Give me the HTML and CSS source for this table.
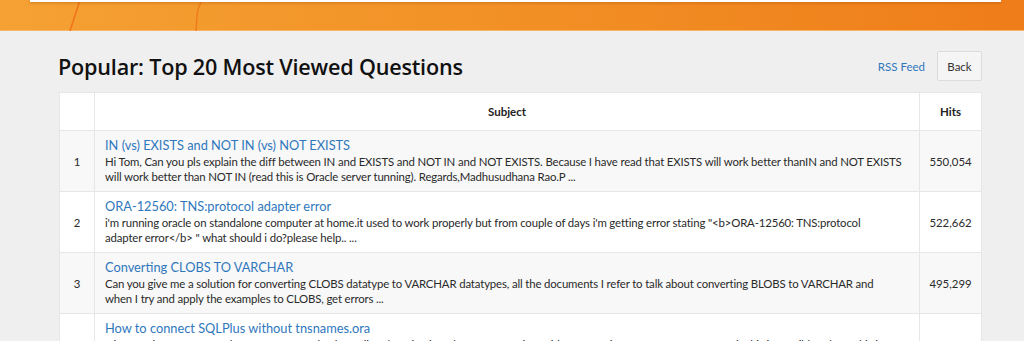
FILE: index.html
```html
<!DOCTYPE html>
<html lang="en">
<head>
<meta charset="utf-8">
<title>Popular: Top 20 Most Viewed Questions</title>
<link rel="stylesheet" href="styles.css">
</head>
<body>
<header class="banner">
  <svg class="banner-lines" width="1024" height="31" viewBox="0 0 1024 31" aria-hidden="true">
    <path d="M80 0 L70 31" stroke="#f0741a" stroke-width="1.6" fill="none"/>
    <path d="M202 0 Q197 10 197 16 L196 31" stroke="#ef7a1e" stroke-width="1.4" fill="none"/>
  </svg>
  <div class="banner-panel"></div>
</header>
<main class="page">
  <div class="page-head">
    <h1 class="page-title">Popular: Top 20 Most Viewed Questions</h1>
    <div class="page-actions">
      <a class="rss" href="#">RSS Feed</a>
      <button class="btn" type="button">Back</button>
    </div>
  </div>
  <table class="qtable">
    <thead>
      <tr><th class="c-num"></th><th class="c-subj">Subject</th><th class="c-hits">Hits</th></tr>
    </thead>
    <tbody>
      <tr>
        <td class="c-num">1</td>
        <td class="c-subj"><a class="q-title" href="#">IN (vs) EXISTS and NOT IN (vs) NOT EXISTS</a>
          <p class="q-desc">Hi Tom, Can you pls explain the diff between IN and EXISTS and NOT IN and NOT EXISTS. Because I have read that EXISTS will work better thanIN and NOT EXISTS will work better than NOT IN (read this is Oracle server tunning). Regards,Madhusudhana Rao.P ...</p></td>
        <td class="c-hits">550,054</td>
      </tr>
      <tr>
        <td class="c-num">2</td>
        <td class="c-subj"><a class="q-title" href="#">ORA-12560: TNS:protocol adapter error</a>
          <p class="q-desc">i'm running oracle on standalone computer at home.it used to work properly but from couple of days i'm getting error stating "&lt;b&gt;ORA-12560: TNS:protocol<br>adapter error&lt;/b&gt; " what should i do?please help.. ...</p></td>
        <td class="c-hits">522,662</td>
      </tr>
      <tr>
        <td class="c-num">3</td>
        <td class="c-subj"><a class="q-title" href="#">Converting CLOBS TO VARCHAR</a>
          <p class="q-desc">Can you give me a solution for converting CLOBS datatype to VARCHAR datatypes, all the documents I refer to talk about converting BLOBS to VARCHAR and<br>when I try and apply the examples to CLOBS, get errors ...</p></td>
        <td class="c-hits">495,299</td>
      </tr>
      <tr>
        <td class="c-num">4</td>
        <td class="c-subj"><a class="q-title" href="#">How to connect SQLPlus without tnsnames.ora</a>
          <p class="q-desc">Hi, am trying to use SQLPlus to connect to database directly, using just the connect string, without referring to tnsnames.ora. How is this is possible? I have this in my ...</p></td>
        <td class="c-hits">435,792</td>
      </tr>
    </tbody>
  </table>
</main>
</body>
</html>
```
FILE: styles.css
```css
* { box-sizing: border-box; }
html, body { margin: 0; padding: 0; }
body {
  background: #efefef;
  font-family: "Lato", "Open Sans", "Liberation Sans", sans-serif;
  color: #333;
  overflow: hidden;
}
.banner {
  position: relative;
  height: 31px;
  background: linear-gradient(90deg, #f5a133 0%, #f29227 45%, #ef7d19 100%);
  border-bottom: 1px solid #f7b56a;
}
.banner-lines { position: absolute; left: 0; top: 0; }
.banner-panel {
  position: absolute;
  left: 30px;
  right: 23px;
  top: 0;
  height: 2px;
  background: #fff;
  box-shadow: 0 1px 3px rgba(120, 50, 0, 0.35);
}
.page {
  padding: 19px 42px 0 59px;
}
.page-head {
  display: flex;
  align-items: center;
  justify-content: space-between;
  height: 32px;
  margin-bottom: 10px;
}
.page-title {
  margin: 0 0 0 -1px;
  font-family: "Open Sans", "Lato", sans-serif;
  font-size: 21.6px;
  font-weight: 600;
  color: #111;
  letter-spacing: -0.2px;
}
.page-actions { display: flex; align-items: center; gap: 12px; }
.rss {
  color: #2f77bd;
  font-size: 11.5px;
  text-decoration: none;
}
.btn {
  font-family: inherit;
  font-size: 11.5px;
  color: #333;
  background: #f5f5f5;
  border: 1px solid #dcdcdc;
  border-radius: 2px;
  width: 45px;
  height: 30px;
  padding: 0;
}
.qtable {
  width: 100%;
  border-collapse: collapse;
  table-layout: fixed;
  font-size: 11.4px;
}
.qtable th, .qtable td {
  border: 1px solid #e6e6e6;
}
.qtable th {
  background: #fff;
  height: 38px;
  font-weight: 700;
  color: #222;
  font-size: 11.5px;
}
.qtable .c-num { width: 35px; text-align: center; }
.qtable .c-hits { width: 62px; text-align: center; }
.qtable td { height: 61px; vertical-align: middle; color: #2a2a2a; }
.qtable td.c-subj { padding: 6px 8px 7px 10px; text-align: left; }
.qtable td.c-num { padding: 0; text-align: center; }
.qtable tbody tr:nth-child(odd) td { background: #f8f8f8; }
.qtable tbody tr:nth-child(even) td { background: #fff; }
.q-title {
  display: block;
  color: #2f77bd;
  font-size: 12.8px;
  line-height: 17px;
  text-decoration: none;
}
.q-desc {
  margin: 0;
  line-height: 15px;
  color: #2a2a2a;
  letter-spacing: -0.15px;
}
```
